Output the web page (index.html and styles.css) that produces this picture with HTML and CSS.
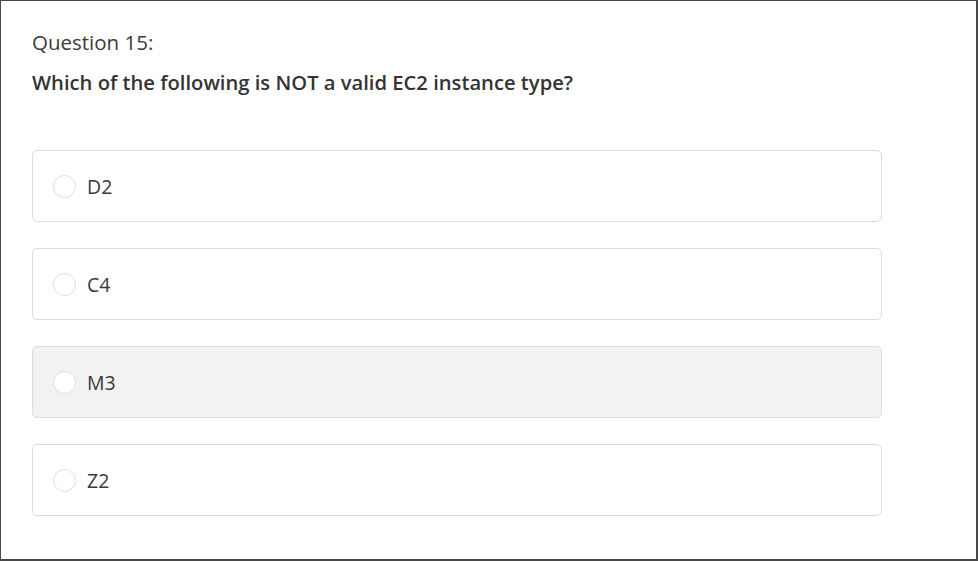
FILE: index.html
```html
<!DOCTYPE html>
<html>
<head>
<meta charset="utf-8">
<link rel="stylesheet" href="styles.css">
</head>
<body>
<div class="frame">
  <div class="question-label">Question 15:</div>
  <div class="question-text">Which of the following is NOT a valid EC2 instance type?</div>
  <div class="options">
    <label class="option"><span class="radio"></span><span class="opt-text">D2</span></label>
    <label class="option"><span class="radio"></span><span class="opt-text">C4</span></label>
    <label class="option option-hover"><span class="radio"></span><span class="opt-text">M3</span></label>
    <label class="option"><span class="radio"></span><span class="opt-text">Z2</span></label>
  </div>
</div>
</body>
</html>
```

FILE: styles.css
```css
html, body {
  margin: 0;
  padding: 0;
  background: #fff;
}
.frame {
  box-sizing: border-box;
  width: 978px;
  height: 561px;
  border-style: solid;
  border-color: #484848;
  border-width: 1px 2px 2px 1px;
  padding: 28px 0 0 31px;
  font-family: "Open Sans", "Liberation Sans", sans-serif;
  color: #333;
}
.question-label {
  font-size: 20.5px;
  line-height: 26px;
  color: #3a3a3a;
}
.question-text {
  margin-top: 14px;
  font-size: 20.2px;
  line-height: 26px;
  font-weight: 600;
  color: #333;
}
.options {
  margin-top: 55px;
  display: flex;
  flex-direction: column;
  gap: 26px;
  width: 850px;
}
.option {
  box-sizing: border-box;
  height: 72px;
  border: 1px solid #dcdcdc;
  border-radius: 5px;
  display: flex;
  align-items: center;
  padding-left: 20px;
  background: #fff;
}
.option-hover {
  background: #f2f2f2;
}
.radio {
  box-sizing: border-box;
  width: 23px;
  height: 23px;
  border-radius: 50%;
  border: 1px solid #dedede;
  background: #fff;
  flex: none;
}
.opt-text {
  margin-left: 11px;
  font-size: 19.5px;
  color: #3a3a3a;
}
```
